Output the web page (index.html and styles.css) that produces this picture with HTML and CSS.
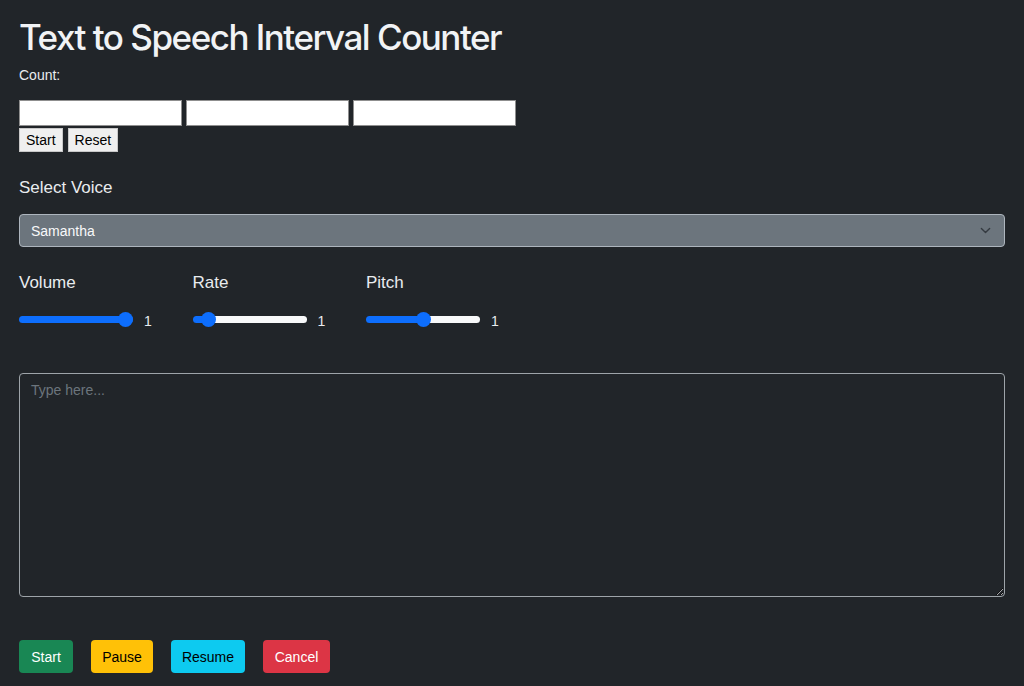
FILE: index.html
```html
<!DOCTYPE html>
<html lang="en">
<head>
    <meta charset="UTF-8">
    <meta name="viewport" content="width=device-width, initial-scale=1.0">
    <title>Text to Speech Interval Counter</title>
    <link rel="stylesheet" href="styles.css">
</head>
<body>
    <div class="page">
        <h1 class="title">Text to Speech Interval Counter</h1>

        <label class="count-label" for="hours">Count:</label>
        <div class="count-inputs">
            <input type="text" id="hours" class="count-input">
            <input type="text" id="minutes" class="count-input">
            <input type="text" id="seconds" class="count-input">
        </div>
        <div class="count-actions">
            <button class="plain-btn" type="button">Start</button>
            <button class="plain-btn" type="button">Reset</button>
        </div>

        <label class="field-label" for="voice">Select Voice</label>
        <div class="select-wrap">
            <select id="voice" class="voice-select">
                <option>Samantha</option>
            </select>
            <svg class="select-arrow" width="11" height="11" viewBox="0 0 16 16">
                <path d="M2 5l6 6 6-6" fill="none" stroke="#343a40" stroke-width="2" stroke-linecap="round" stroke-linejoin="round"/>
            </svg>
        </div>

        <div class="sliders">
            <div class="slider-group">
                <label class="field-label" for="volume">Volume</label>
                <div class="slider-row">
                    <input type="range" id="volume" class="range" min="0" max="1" step="0.1" value="1" style="--fill: 100%">
                    <span class="range-value">1</span>
                </div>
            </div>
            <div class="slider-group">
                <label class="field-label" for="rate">Rate</label>
                <div class="slider-row">
                    <input type="range" id="rate" class="range" min="0.1" max="10" step="0.1" value="1" style="--fill: 14%">
                    <span class="range-value">1</span>
                </div>
            </div>
            <div class="slider-group">
                <label class="field-label" for="pitch">Pitch</label>
                <div class="slider-row">
                    <input type="range" id="pitch" class="range" min="0" max="2" step="0.1" value="1" style="--fill: 50%">
                    <span class="range-value">1</span>
                </div>
            </div>
        </div>

        <textarea class="speech-text" placeholder="Type here..."></textarea>

        <div class="actions">
            <button class="btn btn-start" type="button">Start</button>
            <button class="btn btn-pause" type="button">Pause</button>
            <button class="btn btn-resume" type="button">Resume</button>
            <button class="btn btn-cancel" type="button">Cancel</button>
        </div>
    </div>
</body>
</html>
```

FILE: styles.css
```css
* {
    box-sizing: border-box;
}
body {
    margin: 0;
    background-color: #212529;
    color: #e9ecef;
    font-family: "Liberation Sans", Arial, sans-serif;
}
.page {
    padding: 16px 19px 0;
}
.title {
    margin: 0;
    font-family: Inter, "Liberation Sans", sans-serif;
    font-size: 35px;
    font-weight: 500;
    line-height: 43px;
    letter-spacing: -1.5px;
    color: #f1f3f5;
}
.count-label {
    display: block;
    margin-top: 6px;
    font-size: 14px;
    line-height: 20px;
}
.count-inputs {
    display: flex;
    gap: 4px;
    margin-top: 15px;
}
.count-input {
    width: 163px;
    height: 26px;
    margin: 0;
    border: 1px solid #8f8f8f;
    background: #fff;
}
.count-actions {
    display: flex;
    gap: 5px;
    margin-top: 2px;
}
.plain-btn {
    height: 24px;
    padding: 0 6px;
    font-family: "Liberation Sans", Arial, sans-serif;
    font-size: 14px;
    color: #000;
    background: #efefef;
    border: 1px solid #c8c8c8;
    border-radius: 0;
}
.field-label {
    display: block;
    font-size: 17px;
    line-height: 24px;
}
.count-actions + .field-label {
    margin-top: 24px;
}
.select-wrap {
    position: relative;
    margin-top: 14px;
}
.voice-select {
    appearance: none;
    width: 100%;
    height: 33px;
    padding: 0 11px;
    font-family: "Liberation Sans", Arial, sans-serif;
    font-size: 14px;
    color: #f8f9fa;
    background-color: #6c757d;
    border: 1px solid #adb5bd;
    border-radius: 4px;
}
.select-arrow {
    position: absolute;
    right: 14px;
    top: 11px;
}
.sliders {
    display: flex;
    margin-top: 24px;
}
.slider-group {
    width: 173.5px;
}
.slider-row {
    display: flex;
    align-items: center;
    gap: 11px;
    height: 20px;
    margin-top: 14px;
}
.range {
    appearance: none;
    -webkit-appearance: none;
    width: 114px;
    height: 7px;
    margin: 0;
    border-radius: 4px;
    background: linear-gradient(to right, #0d6efd var(--fill), #f8f9fa var(--fill));
}
.range::-webkit-slider-thumb {
    -webkit-appearance: none;
    width: 15px;
    height: 15px;
    border-radius: 50%;
    background: #0d6efd;
}
.range-value {
    font-size: 14px;
    padding-top: 3px;
}
.speech-text {
    display: block;
    width: 100%;
    height: 224px;
    margin-top: 44px;
    padding: 8px 11px;
    font-family: "Liberation Sans", Arial, sans-serif;
    font-size: 14px;
    color: #dee2e6;
    background: transparent;
    border: 1px solid #9ea4a9;
    border-radius: 4px;
    resize: vertical;
}
.speech-text::placeholder {
    color: #6c757d;
}
.actions {
    display: flex;
    gap: 18px;
    margin-top: 43px;
}
.btn {
    height: 33px;
    padding: 0;
    font-family: "Liberation Sans", Arial, sans-serif;
    font-size: 14px;
    border: none;
    border-radius: 4px;
    cursor: pointer;
}
.btn-start {
    width: 54px;
    background-color: #198754;
    color: #fff;
}
.btn-pause {
    width: 62px;
    background-color: #ffc107;
    color: #000;
}
.btn-resume {
    width: 74px;
    background-color: #0dcaf0;
    color: #000;
}
.btn-cancel {
    width: 67px;
    background-color: #dc3545;
    color: #fff;
}
```
